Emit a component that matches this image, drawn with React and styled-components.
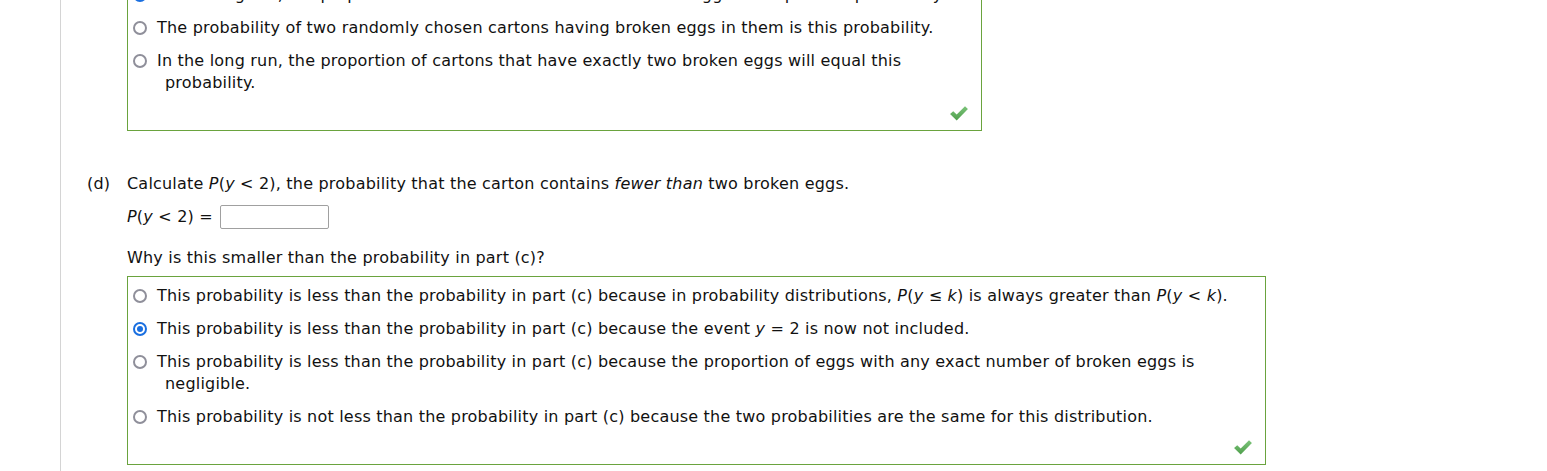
import React from 'react';
import styled, { createGlobalStyle } from 'styled-components';

const Global = createGlobalStyle`
  html, body {
    margin: 0;
    padding: 0;
    background: #fff;
    overflow: hidden;
  }
  body {
    font-family: 'DejaVu Sans', Verdana, sans-serif;
    font-size: 16px;
    letter-spacing: 0.2px;
    color: #111;
  }
`;

const Page = styled.div`
  margin-left: 60px;
  margin-top: -22px;
  min-height: 600px;
  border-left: 1px solid #d4d4d4;
  padding-left: 26px;
`;

const Part = styled.div`
  display: flex;
  margin-bottom: ${(p) => p.$gap || 0}px;
`;

const Label = styled.div`
  width: 40px;
  flex-shrink: 0;
  line-height: 22px;
`;

const Body = styled.div`
  flex: 1;
`;

const Line = styled.p`
  margin: 0 0 ${(p) => p.$after || 0}px;
  line-height: 22px;
  display: flex;
  align-items: center;
  gap: 7px;
  i {
    font-style: italic;
  }
`;

const Box = styled.div`
  width: ${(p) => p.$width}px;
  box-sizing: border-box;
  border: 1px solid #6aa33e;
  padding: ${(p) => p.$top || 6}px 6px 0 5px;
  display: flex;
  flex-direction: column;
  gap: 11px;
`;

const Option = styled.div`
  display: flex;
  align-items: flex-start;
  gap: 10px;
  line-height: 22px;
`;

const Radio = styled.span`
  width: 14px;
  height: 14px;
  margin-top: 4px;
  flex-shrink: 0;
  box-sizing: border-box;
  border-radius: 50%;
  border: 2px solid ${(p) => (p.$on ? '#1a6fe0' : '#8f8f9a')};
  display: flex;
  align-items: center;
  justify-content: center;
  &::after {
    content: '';
    width: 6px;
    height: 6px;
    border-radius: 50%;
    background: ${(p) => (p.$on ? '#1a6fe0' : 'transparent')};
  }
`;

const OptText = styled.span`
  padding-left: 8px;
  text-indent: -8px;
  i {
    font-style: italic;
  }
`;

const CheckRow = styled.div`
  display: flex;
  justify-content: flex-end;
  padding: 0 6px ${(p) => p.$pb || 8}px 0;
`;

const Input = styled.span`
  display: inline-block;
  width: 109px;
  height: 24px;
  box-sizing: border-box;
  border: 1px solid #a0a0a0;
  border-radius: 2px;
`;

function Check() {
  return (
    <svg width="20" height="17" viewBox="0 0 19 16">
      <defs>
        <linearGradient id="cg" x1="0" y1="0" x2="0" y2="1">
          <stop offset="0" stopColor="#7cc47a" />
          <stop offset="1" stopColor="#4f9f4c" />
        </linearGradient>
      </defs>
      <path d="M1 8.5 L4 5.8 L7.3 9 L15.2 1 L18 3.8 L7.3 14.6 Z" fill="url(#cg)" />
    </svg>
  );
}

function Opt({ on, children }) {
  return (
    <Option>
      <Radio $on={on} />
      <OptText>{children}</OptText>
    </Option>
  );
}

export default function App() {
  return (
    <>
      <Global />
      <Page>
        <Part $gap={42}>
          <Label />
          <Body>
            <Box $width={855} $top={5}>
              <Opt on>In the long run, the proportion that will have at most two broken eggs will equal this probability.</Opt>
              <Opt>The probability of two randomly chosen cartons having broken eggs in them is this probability.</Opt>
              <Opt>
                In the long run, the proportion of cartons that have exactly two broken eggs will equal this probability.
              </Opt>
              <CheckRow>
                <Check />
              </CheckRow>
            </Box>
          </Body>
        </Part>
        <Part>
          <Label>(d)</Label>
          <Body>
            <Line $after={10}>
              <span>
                Calculate <i>P</i>(<i>y</i> &lt; 2), the probability that the carton contains <i>fewer than</i> two broken eggs.
              </span>
            </Line>
            <Line $after={18}>
              <span>
                <i>P</i>(<i>y</i> &lt; 2) =
              </span>
              <Input />
            </Line>
            <Line $after={7}>Why is this smaller than the probability in part (c)?</Line>
            <Box $width={1139} $top={8}>
              <Opt>
                This probability is less than the probability in part (c) because in probability distributions, <i>P</i>(<i>y</i> ≤ <i>k</i>) is always greater than <i>P</i>(<i>y</i> &lt; <i>k</i>).
              </Opt>
              <Opt on>
                This probability is less than the probability in part (c) because the event <i>y</i> = 2 is now not included.
              </Opt>
              <Opt>
                This probability is less than the probability in part (c) because the proportion of eggs with any exact number of broken eggs is negligible.
              </Opt>
              <Opt>
                This probability is not less than the probability in part (c) because the two probabilities are the same for this distribution.
              </Opt>
              <CheckRow $pb={8}>
                <Check />
              </CheckRow>
            </Box>
          </Body>
        </Part>
      </Page>
    </>
  );
}
